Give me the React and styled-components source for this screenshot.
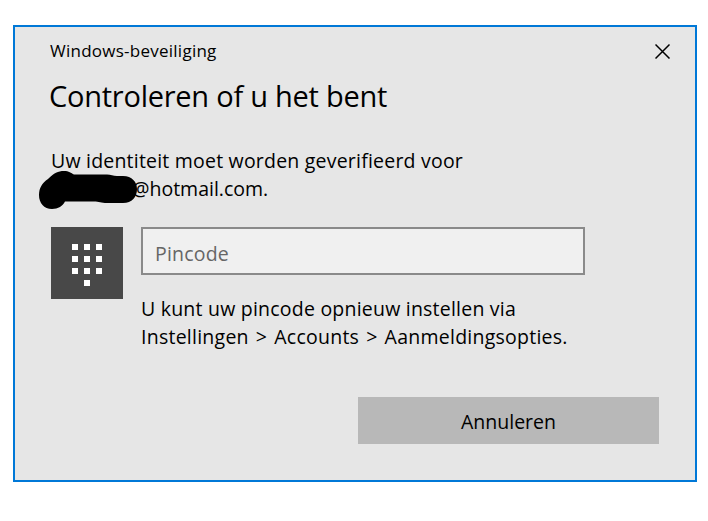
import React, { useState } from 'react';
import styled, { createGlobalStyle } from 'styled-components';

const GlobalStyle = createGlobalStyle`
  body{
    margin: 0;
    background: #ffffff;
    font-family: 'Open Sans', 'Noto Sans', sans-serif;
    font-weight: 370;
    color: #000000;
  }

  *{
    box-sizing: border-box;
  }
`

const Dialog = styled.section`
  width: 684px;
  height: 457px;
  margin: 25px 0 0 13px;
  padding: 12px 36px 36px;
  border: 2px solid #0078d7;
  background: #e6e6e6;
  display: flex;
  flex-direction: column;
`

const TitleBar = styled.header`
  display: flex;
  justify-content: space-between;
  align-items: center;
  height: 24px;
  margin: 0 -12px 0 -1px;
`

const Caption = styled.span`
  font-size: 17px;
  line-height: 24px;
  letter-spacing: 0.25px;
  white-space: nowrap;
`

const CloseButton = styled.button`
  display: flex;
  padding: 0;
  border: none;
  background: none;
  cursor: pointer;
`

const Heading = styled.h1`
  margin: 13px 0 0 -2px;
  font-size: 29px;
  font-weight: inherit;
  line-height: 40px;
  letter-spacing: -0.25px;
  white-space: nowrap;
`

const Text = styled.p`
  margin: ${props => props.$top}px 0 0;
  font-size: 19.5px;
  line-height: 28px;
  white-space: nowrap;
`

const Line = styled.span`
  display: block;
  letter-spacing: ${props => props.$spacing || 0}px;
  word-spacing: ${props => props.$gap || 0}px;
`

const HiddenName = styled.span`
  position: relative;
  display: inline-block;
  width: 81px;
  height: 14px;

  svg{
    position: absolute;
    left: -14px;
    top: -14px;
  }
`

const PinRow = styled.div`
  display: flex;
  align-items: flex-start;
  gap: 18px;
  margin-top: 24px;
`

const PinTile = styled.div`
  display: flex;
  flex: none;
  width: 72px;
  height: 72px;
  background: #484848;
`

const PinBody = styled.div`
  width: 444px;
`

const PinInput = styled.input`
  display: block;
  width: 444px;
  height: 48px;
  padding: 4px 12px 0;
  border: 2px solid #8a8a8a;
  border-radius: 0;
  outline: none;
  background: #f0f0f0;
  font-family: inherit;
  font-weight: inherit;
  font-size: 19.5px;
  letter-spacing: 0.2px;
  color: #000000;

  &::placeholder{
    color: #666666;
    opacity: 1;
  }
`

const Footer = styled.footer`
  display: flex;
  justify-content: flex-end;
  margin-top: auto;
`

const CancelButton = styled.button`
  width: 301px;
  height: 47px;
  padding: 2px 0 0;
  border: none;
  background: #b8b8b8;
  font-family: inherit;
  font-weight: inherit;
  font-size: 19.5px;
  color: #000000;
  cursor: pointer;
`

const KEYS = [
  [21, 17], [33, 17], [45, 17],
  [21, 29], [33, 29], [45, 29],
  [21, 41], [33, 41], [45, 41],
  [33, 53],
];

function App() {

  const [pin, setPin] = useState('');

  return (
    <>
      <GlobalStyle />
      <Dialog>
        <TitleBar>
          <Caption>Windows-beveiliging</Caption>
          <CloseButton aria-label='Sluiten'>
            <svg width='16' height='16' viewBox='0 0 16 16'>
              <path d='M0.5 1.5L14.5 15.5M14.5 1.5L0.5 15.5' stroke='#000' strokeWidth='1.5' />
            </svg>
          </CloseButton>
        </TitleBar>
        <Heading>Controleren of u het bent</Heading>
        <Text $top={31}>
          <Line $spacing={0.21}>Uw identiteit moet worden geverifieerd voor</Line>
          <Line>
            <HiddenName>
              <svg width='102' height='42' viewBox='0 0 102 42'>
                <path
                  d='M2 27C2 20 5 15 11 11C17 5 21 3 27 3C32 3 34 5 37 6.5H70C74 6.5 76 8 80 8H86C95 8 100 14 100 21C100 29 95 35 86 35H70C64 35 62 33.5 57 33.5H28C26 38 21 41 15 41C7 41 2 35 2 27Z'
                  fill='#000'
                />
              </svg>
            </HiddenName>
            @hotmail.com.
          </Line>
        </Text>
        <PinRow>
          <PinTile>
            <svg width='72' height='72' viewBox='0 0 72 72' shapeRendering='crispEdges'>
              {KEYS.map(([x, y]) => (
                <rect key={`${x}-${y}`} x={x} y={y} width='6' height='6' fill='#fff' />
              ))}
            </svg>
          </PinTile>
          <PinBody>
            <PinInput
              type='password' placeholder='Pincode' value={pin}
              onChange={(e) => setPin(e.target.value)}
            />
            <Text $top={20}>
              <Line $spacing={0.22}>U kunt uw pincode opnieuw instellen via</Line>
              <Line $spacing={0.25} $gap={1.7}>Instellingen &gt; Accounts &gt; Aanmeldingsopties.</Line>
            </Text>
          </PinBody>
        </PinRow>
        <Footer>
          <CancelButton>Annuleren</CancelButton>
        </Footer>
      </Dialog>
    </>
  )
}

export default App
